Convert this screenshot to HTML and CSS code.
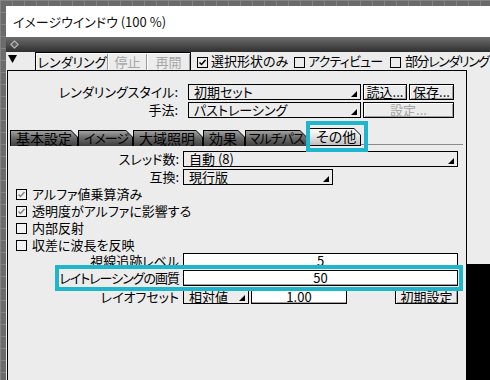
FILE: index.html
```html
<!DOCTYPE html>
<html lang="ja">
<head>
<meta charset="utf-8">
<title>イメージウインドウ</title>
<link rel="stylesheet" href="styles.css">
</head>
<body>
<div class="screen">
  <div class="window">
    <div class="titlebar">イメージウインドウ (100 %)</div>
    <div class="darkbar">
      <svg class="diamond" width="9" height="9" viewBox="0 0 9 9"><path d="M4.5 0.9 L8.1 4.5 L4.5 8.1 L0.9 4.5 Z" fill="#5e5e5e" stroke="#b0b0b0" stroke-width="1.3" stroke-linejoin="round"/></svg>
    </div>
    <div class="toolbar">
      <svg class="collapse" width="9" height="8" viewBox="0 0 9 8"><polygon points="0,0 9,0 4.5,8" fill="#000"/></svg>
      <div class="btngroup">
        <span class="tbtn tb1">レンダリング</span>
        <span class="tbtn tb2 disabled">停止</span>
        <span class="tbtn tb3 disabled">再開</span>
      </div>
      <div class="tcheck tc1">
        <svg class="cb" width="11" height="11" viewBox="0 0 11 11"><rect x="0.5" y="0.5" width="10" height="10" fill="none" stroke="#000"/><polyline points="2.5,5.5 4.5,7.5 8.5,3" fill="none" stroke="#000" stroke-width="1.5"/></svg>
        <span>選択形状のみ</span>
      </div>
      <div class="tcheck tc2">
        <svg class="cb" width="11" height="11" viewBox="0 0 11 11"><rect x="0.5" y="0.5" width="10" height="10" fill="none" stroke="#000"/></svg>
        <span class="tight-s">アクティビュー</span>
      </div>
      <div class="tcheck tc3">
        <svg class="cb" width="11" height="11" viewBox="0 0 11 11"><rect x="0.5" y="0.5" width="10" height="10" fill="none" stroke="#000"/></svg>
        <span class="tight-t">部分レンダリング</span>
      </div>
    </div>
    <div class="main">
      <div class="panel">
        <div class="prow top r1">
          <span class="lbl">レンダリングスタイル:</span>
          <div class="dropdown dd-top">初期セット</div>
          <div class="btn b-load">読込...</div>
          <div class="btn b-save">保存...</div>
        </div>
        <div class="prow top r2">
          <span class="lbl">手法:</span>
          <div class="dropdown dd-top">パストレーシング</div>
          <div class="btn b-setting disabled">設定...</div>
        </div>
        <div class="tabs">
          <div class="tab t1">基本設定</div>
          <div class="tab t2 kana">イメージ</div>
          <div class="tab t3">大域照明</div>
          <div class="tab t4">効果</div>
          <div class="tab t5 kana">マルチパス</div>
          <div class="tab t6 active">その他</div>
          <div class="tabline"></div>
          <div class="hl hl-tab"></div>
        </div>
        <div class="content">
          <div class="prow crow c-thread">
            <span class="lbl">スレッド数:</span>
            <div class="dropdown dd-thread">自動 (8)</div>
          </div>
          <div class="prow crow c-compat">
            <span class="lbl">互換:</span>
            <div class="dropdown dd-compat">現行版</div>
          </div>
          <div class="checks">
            <div class="check">
              <svg class="cb" width="11" height="11" viewBox="0 0 11 11"><rect x="0.5" y="0.5" width="10" height="10" fill="#f2f2f2" stroke="#000"/><polyline points="2.5,5.5 4.5,7.5 8.5,3" fill="none" stroke="#858585" stroke-width="1.5"/></svg>
              <span>アルファ値乗算済み</span>
            </div>
            <div class="check">
              <svg class="cb" width="11" height="11" viewBox="0 0 11 11"><rect x="0.5" y="0.5" width="10" height="10" fill="#f2f2f2" stroke="#000"/><polyline points="2.5,5.5 4.5,7.5 8.5,3" fill="none" stroke="#858585" stroke-width="1.5"/></svg>
              <span>透明度がアルファに影響する</span>
            </div>
            <div class="check">
              <svg class="cb" width="11" height="11" viewBox="0 0 11 11"><rect x="0.5" y="0.5" width="10" height="10" fill="#f2f2f2" stroke="#000"/></svg>
              <span>内部反射</span>
            </div>
            <div class="check">
              <svg class="cb" width="11" height="11" viewBox="0 0 11 11"><rect x="0.5" y="0.5" width="10" height="10" fill="#f2f2f2" stroke="#000"/></svg>
              <span>収差に波長を反映</span>
            </div>
          </div>
          <div class="prow crow c-trace">
            <span class="lbl">視線追跡レベル</span>
            <div class="field wide">5</div>
          </div>
          <div class="prow crow c-quality">
            <span class="lbl tight">レイトレーシングの画質</span>
            <div class="field wide">50</div>
            <div class="hl hl-quality"></div>
          </div>
          <div class="prow crow c-offset">
            <span class="lbl">レイオフセット</span>
            <div class="dropdown dd-offset">相対値</div>
            <div class="field f-offset">1.00</div>
            <div class="btn b-reset">初期設定</div>
          </div>
        </div>
      </div>
      <div class="side">
        <div class="side-light"></div>
        <div class="side-dark"></div>
      </div>
    </div>
  </div>
</div>
</body>
</html>
```
FILE: styles.css
```css
* { box-sizing: border-box; }
html, body { margin: 0; padding: 0; }
body {
  width: 490px;
  height: 380px;
  overflow: hidden;
  background-color: #6b6b6b;
  background-image:
    linear-gradient(90deg, #838383 1px, transparent 1px),
    linear-gradient(#838383 1px, transparent 1px);
  background-size: 12px 12px;
  font-family: "Noto Sans CJK JP", "Noto Sans", sans-serif;
  font-feature-settings: "palt";
  font-size: 13px;
  line-height: 16px;
  color: #000;
}
.tight { letter-spacing: -1px; }
.tight-s { letter-spacing: -0.8px; }
.tight-t { letter-spacing: -1.4px; }
.screen { padding: 6px 0 0 6px; height: 380px; }
.window {
  width: 484px;
  height: 374px;
  display: flex;
  flex-direction: column;
  background: #ececec;
}
.titlebar {
  height: 31px;
  flex: none;
  background: #fff;
  padding-left: 7px;
  display: flex;
  align-items: center;
  font-size: 13px;
  color: #111;
}
.darkbar {
  height: 15px;
  flex: none;
  background: linear-gradient(#6e6e6e, #2f2f2f);
  padding: 3px 0 0 4px;
}
.diamond { display: block; }

/* toolbar */
.toolbar {
  height: 18px;
  flex: none;
  display: flex;
  align-items: flex-start;
  background: #ececec;
}
.collapse { display: block; margin: 3px 0 0 2px; flex: none; }
.btngroup {
  display: flex;
  height: 18px;
  margin-left: 18px;
  border: 1px solid #000;
  border-bottom: none;
  flex: none;
}
.tbtn {
  display: flex;
  align-items: center;
  justify-content: center;
  height: 17px;
  line-height: 15px;
  white-space: nowrap;
  box-shadow: inset 1px 1px #fff, inset -1px 0 #9a9a9a;
}
.tb1 { width: 72px; }
.tb2 { width: 39px; }
.tb3 { width: 43px; }
.disabled { color: #a6a6a6; }
.tcheck {
  display: flex;
  align-items: center;
  height: 18px;
  white-space: nowrap;
  flex: none;
}
.tcheck .cb { margin-right: 3px; margin-top: 2px; }
.tc1 { margin-left: 6px; width: 97px; }
.tc2 { width: 96px; }
.tc3 .cb { margin-right: 4px; }
.cb { display: block; flex: none; }

/* main area */
.main { flex: 1; display: flex; min-height: 0; }
.panel {
  margin-left: 1px;
  width: 460px;
  flex: none;
  border: 1px solid #000;
  border-bottom: none;
  background: #ececec;
}
.side { flex: 1; display: flex; flex-direction: column; }
.side-light { height: 194px; flex: none; }
.side-dark { flex: 1; background: #000; }

/* rows */
.prow {
  display: flex;
  align-items: center;
  height: 16px;
}
.lbl {
  text-align: right;
  white-space: nowrap;
  line-height: 16px;
  flex: none;
}
.top .lbl { width: 170px; margin-right: 10px; }
.r1 { margin-top: 13px; }
.r2 { margin-top: 2px; }

.dropdown {
  display: flex;
  align-items: center;
  height: 16px;
  border: 1px solid #000;
  padding-left: 5px;
  line-height: 14px;
  background: #ececec;
  white-space: nowrap;
  flex: none;
}
.dropdown::after {
  content: "";
  margin-left: auto;
  align-self: flex-end;
  margin-right: 3px;
  margin-bottom: 2px;
  width: 0;
  height: 0;
  border-left: 6px solid transparent;
  border-bottom: 6px solid #000;
}
.dd-top { width: 173px; }
.btn {
  display: flex;
  align-items: center;
  justify-content: center;
  height: 16px;
  border: 1px solid #000;
  line-height: 14px;
  white-space: nowrap;
  box-shadow: inset 1px 1px #fff, inset -1px -1px #a0a0a0;
  flex: none;
}
.b-load { width: 44px; margin-left: 2px; }
.b-save { width: 45px; margin-left: 2px; }
.b-setting { width: 91px; margin-left: 2px; }

/* tabs */
.tabs {
  position: relative;
  display: flex;
  align-items: flex-end;
  height: 18px;
  margin-top: 10px;
  padding-left: 2px;
}
.tab {
  position: relative;
  z-index: 0;
  height: 16px;
  font-size: 14px;
  line-height: 16px;
  padding-left: 6px;
  white-space: nowrap;
  flex: none;
}
.tab.kana { font-size: 13px; letter-spacing: -1px; }
.tab::before {
  content: "";
  position: absolute;
  inset: 0;
  background: #000;
  clip-path: polygon(0 0, calc(100% - 7px) 0, 100% 7px, 100% 100%, 0 100%);
  z-index: -1;
}
.tab::after {
  content: "";
  position: absolute;
  inset: 1px 1px 0 1px;
  background: linear-gradient(#a2a2a2, #6a6a6a 45%, #3e3e3e);
  clip-path: polygon(0 0, calc(100% - 6px) 0, 100% 6px, 100% 100%, 0 100%);
  z-index: -1;
}
.t1 { width: 68px; }
.t2 { width: 55px; }
.t3 { width: 70px; }
.t4 { width: 42px; }
.t5 { width: 62px; padding-left: 4px; }
.t6 { width: 52px; margin-left: 2px; height: 18px; line-height: 17px; padding-left: 7px; }
.tab.active::after {
  inset: 1px 1px 1px 1px;
  background: linear-gradient(#ffffff, #e4e4e4 50%, #bdbdbd);
}
.tabline {
  flex: 1;
  height: 1px;
  margin: 0 3px 1px 0;
  background: #8a8a8a;
}
.hl {
  position: absolute;
  border: 4px solid #1db6cd;
  pointer-events: none;
  z-index: 2;
}
.hl-tab { left: 298px; top: -7px; width: 62px; height: 31px; }

/* content */
.crow .lbl { width: 171px; margin-right: 4px; }
.c-thread { margin-top: 5px; }
.c-compat { margin-top: 2px; }
.dd-thread { width: 275px; }
.dd-compat { width: 150px; }
.checks { display: flex; flex-direction: column; }
.check {
  display: flex;
  align-items: center;
  height: 17px;
  padding: 1px 0 0 8px;
  line-height: 16px;
  white-space: nowrap;
}
.check .cb { margin-right: 5px; }
.field {
  height: 16px;
  border: 1px solid #000;
  background: #fff;
  box-shadow: inset 0 -1px #a0a0a0;
  text-align: center;
  line-height: 14px;
  flex: none;
}
.wide { width: 275px; }
.c-quality { margin-top: 1px; position: relative; }
.hl-quality { left: 47px; top: -5px; width: 408px; height: 26px; }
.c-offset { margin-top: 3px; height: 15px; }
.c-offset .dropdown, .c-offset .field, .c-offset .btn { height: 15px; line-height: 13px; }
.dd-offset { width: 66px; }
.f-offset { width: 96px; margin-left: 2px; }
.b-reset { width: 63px; margin-left: 48px; }
```
